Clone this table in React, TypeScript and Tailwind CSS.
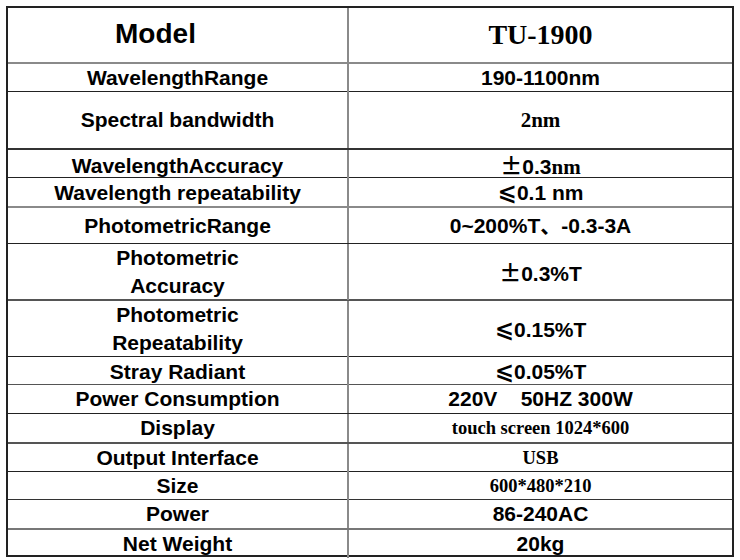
const sans = 'font-["Liberation_Sans",Arial,"Noto_Sans_CJK_SC",sans-serif]'
const serif = 'font-["Liberation_Serif","Times_New_Roman","Noto_Sans_CJK_SC",serif]'

type Row = {
    label: React.ReactNode
    value: React.ReactNode
    h: string
    line: string
}

const Le = () => <span className='font-["DejaVu_Sans"] font-bold text-[23px]'>⩽</span>
const Pm = () => <span className='font-["Noto_Sans_CJK_SC"] font-bold text-[22px]'>±</span>

const rows: Row[] = [
    {
        label: <span className="text-[28px] pr-[44px]">Model</span>,
        value: <span className={`${serif} text-[28px]`}>TU-1900</span>,
        h: 'h-[54px]',
        line: '',
    },
    { label: 'WavelengthRange', value: '190-1100nm', h: 'h-[29px]', line: 'border-t-2 border-[#8a8a8a]' },
    {
        label: 'Spectral bandwidth',
        value: <span className={serif}>2nm</span>,
        h: 'h-[57px]',
        line: 'border-t border-[#222]',
    },
    {
        label: 'WavelengthAccuracy',
        value: (
            <span>
                <Pm />0.3<span className={serif}>nm</span>
            </span>
        ),
        h: 'h-[29px]',
        line: 'border-t-2 border-[#333]',
    },
    {
        label: 'Wavelength repeatability',
        value: (
            <span>
                <Le />0.1 nm
            </span>
        ),
        h: 'h-[29px]',
        line: 'border-t border-[#222]',
    },
    { label: 'PhotometricRange', value: '0~200%T、-0.3-3A', h: 'h-[37px]', line: 'border-t-2 border-[#8a8a8a]' },
    {
        label: (
            <>
                Photometric
                <br />
                Accuracy
            </>
        ),
        value: (
            <span>
                <Pm />0.3%T
            </span>
        ),
        h: 'h-[56px]',
        line: 'border-t border-[#222]',
    },
    {
        label: (
            <>
                Photometric
                <br />
                Repeatability
            </>
        ),
        value: (
            <span>
                <Le />0.15%T
            </span>
        ),
        h: 'h-[57px]',
        line: 'border-t-2 border-[#555]',
    },
    {
        label: 'Stray Radiant',
        value: (
            <span>
                <Le />0.05%T
            </span>
        ),
        h: 'h-[28px]',
        line: 'border-t border-[#222]',
    },
    {
        label: 'Power Consumption',
        value: <span className="whitespace-pre">220V    50HZ 300W</span>,
        h: 'h-[29px]',
        line: 'border-t border-[#555]',
    },
    {
        label: 'Display',
        value: <span className={`${serif} text-[18.5px]`}>touch screen 1024*600</span>,
        h: 'h-[29px]',
        line: 'border-t border-[#222]',
    },
    {
        label: 'Output Interface',
        value: <span className={`${serif} text-[18.5px]`}>USB</span>,
        h: 'h-[29px]',
        line: 'border-t-2 border-[#555]',
    },
    {
        label: 'Size',
        value: <span className={`${serif} text-[18.5px]`}>600*480*210</span>,
        h: 'h-[28px]',
        line: 'border-t border-[#222]',
    },
    { label: 'Power', value: '86-240AC', h: 'h-[29px]', line: 'border-t border-[#333]' },
    { label: 'Net Weight', value: '20kg', h: 'h-[27px]', line: 'border-t-2 border-[#777]' },
]

export default function App() {
    return (
        <div className="w-[740px] h-[560px] bg-white pt-[6px] pl-[6px]">
            <div className={`${sans} w-[728px] border-2 border-[#222] font-bold text-black text-[21px] leading-[28px]`}>
                {rows.map((row, i) => (
                    <div key={i} className={`grid grid-cols-[341px_1fr] ${row.h} ${row.line}`}>
                        <div className="flex items-center justify-center text-center border-r-2 border-[#8a8a8a]">
                            <div>{row.label}</div>
                        </div>
                        <div className="flex items-center justify-center text-center">{row.value}</div>
                    </div>
                ))}
            </div>
        </div>
    )
}
